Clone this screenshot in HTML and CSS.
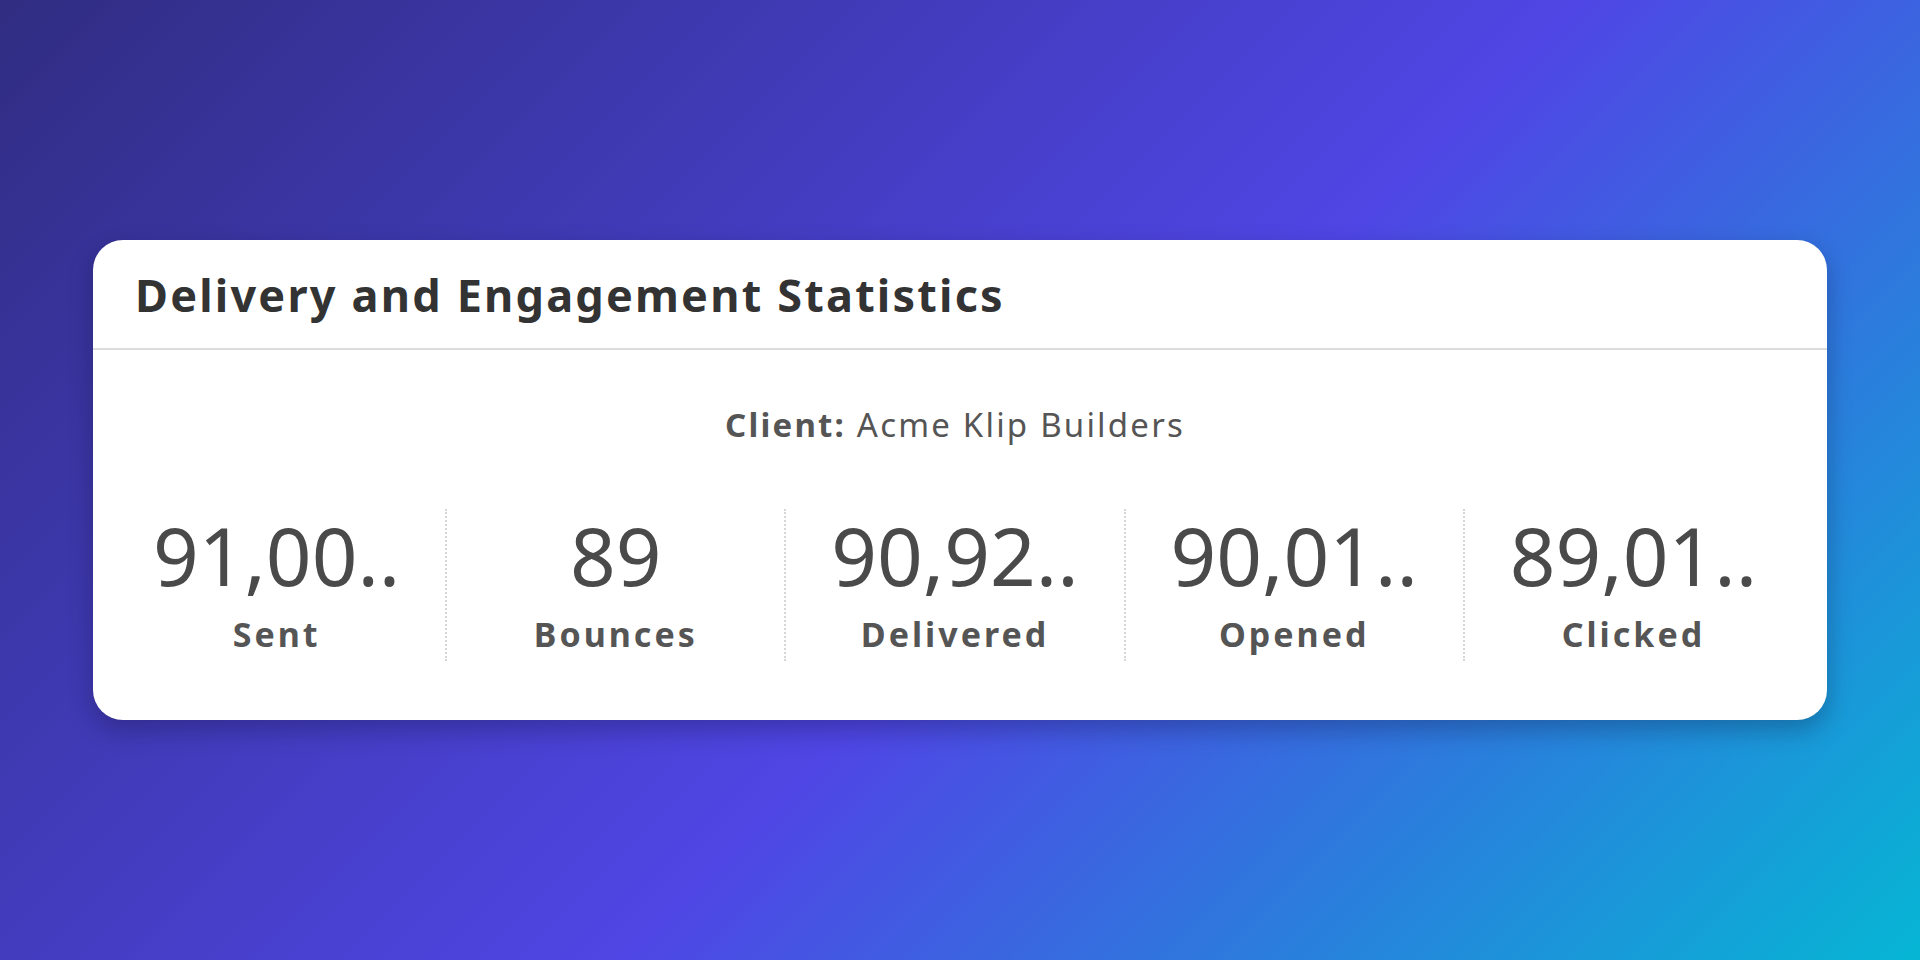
FILE: index.html
```html
<!DOCTYPE html>
<html lang="en">
<head>
<meta charset="utf-8">
<title>Delivery and Engagement Statistics</title>
<link rel="stylesheet" href="styles.css">
</head>
<body>
  <main class="stage">
    <section class="card">
      <header class="card-header">
        <h1 class="card-title">Delivery and Engagement Statistics</h1>
      </header>
      <div class="card-body">
        <p class="client"><strong>Client:</strong> Acme Klip Builders</p>
        <div class="stats">
          <div class="stat">
            <div class="stat-value">91,00..</div>
            <div class="stat-label">Sent</div>
          </div>
          <div class="stat">
            <div class="stat-value">89</div>
            <div class="stat-label">Bounces</div>
          </div>
          <div class="stat">
            <div class="stat-value">90,92..</div>
            <div class="stat-label">Delivered</div>
          </div>
          <div class="stat">
            <div class="stat-value">90,01..</div>
            <div class="stat-label">Opened</div>
          </div>
          <div class="stat">
            <div class="stat-value">89,01..</div>
            <div class="stat-label">Clicked</div>
          </div>
        </div>
      </div>
    </section>
  </main>
</body>
</html>
```

FILE: styles.css
```css
* {
  box-sizing: border-box;
}

html,
body {
  margin: 0;
  height: 100%;
}

body {
  font-family: "Noto Sans", "Open Sans", "DejaVu Sans", sans-serif;
  background: linear-gradient(135deg, #302d82 0%, #4f46e5 55%, #06b6d4 100%);
  overflow: hidden;
}

.stage {
  height: 100%;
  display: flex;
  align-items: center;
  padding: 0 93px;
}

.card {
  width: 100%;
  height: 480px;
  background: #ffffff;
  border-radius: 30px;
  box-shadow: 0 10px 24px rgba(10, 10, 40, 0.28);
  display: flex;
  flex-direction: column;
}

.card-header {
  height: 110px;
  display: flex;
  align-items: center;
  padding: 0 42px;
  border-bottom: 2px solid #dcdcdc;
}

.card-title {
  margin: 0;
  font-size: 45px;
  font-weight: 700;
  color: #333333;
  letter-spacing: 2.2px;
}

.card-body {
  flex: 1;
  padding: 55px 25px 0 15px;
}

.client {
  margin: 0;
  text-align: center;
  font-size: 33px;
  line-height: 40px;
  color: #555555;
  letter-spacing: 2.2px;
}

.client strong {
  font-weight: 700;
}

.stats {
  display: flex;
  margin-top: 64px;
}

.stat {
  flex: 1;
  text-align: center;
  padding: 6px 0 7px;
}

.stat + .stat {
  border-left: 2px dotted #d6d6d6;
}

.stat-value {
  font-size: 80px;
  line-height: 80px;
  color: #4a4a4a;
}

.stat-label {
  margin-top: 19px;
  font-size: 34px;
  line-height: 40px;
  font-weight: 700;
  color: #555555;
  letter-spacing: 3px;
}
```
